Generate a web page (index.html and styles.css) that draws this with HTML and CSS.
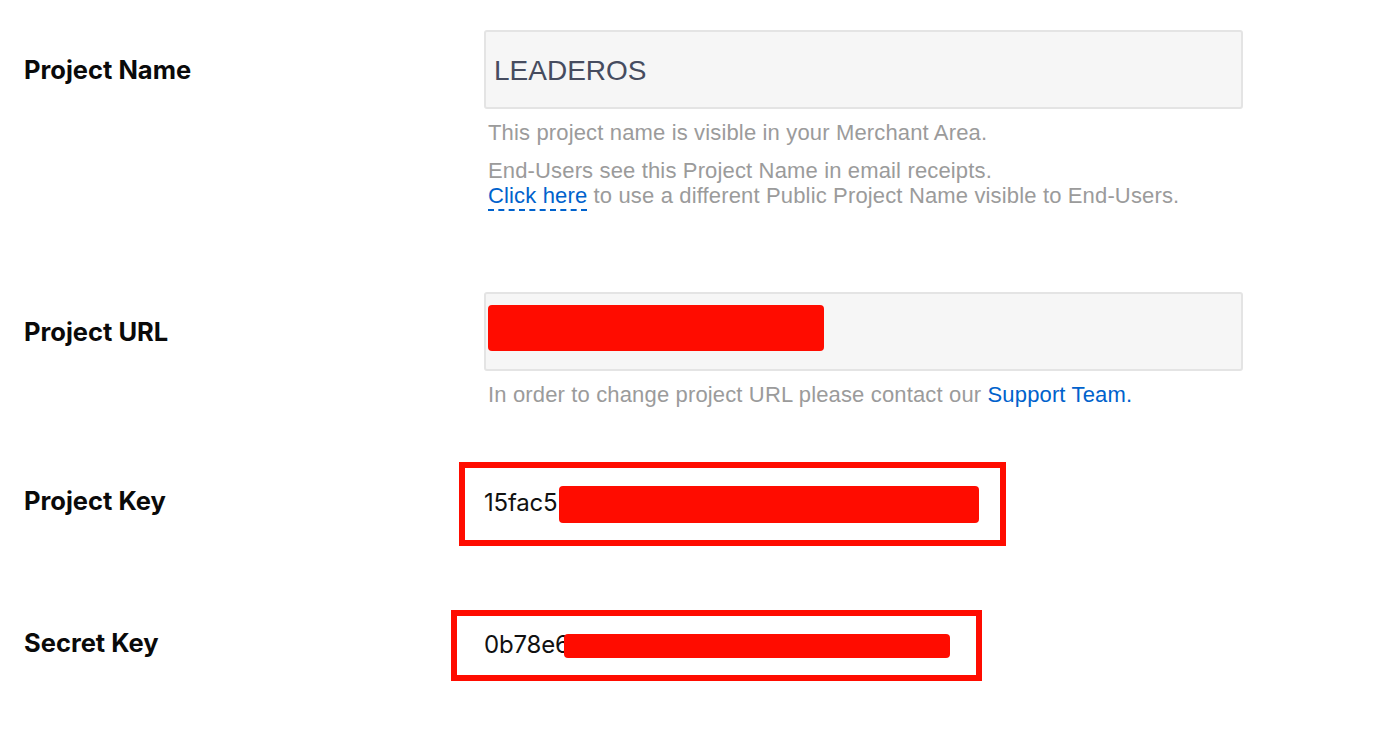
FILE: index.html
```html
<!DOCTYPE html>
<html lang="en">
<head>
<meta charset="utf-8">
<title>Project settings</title>
<link rel="stylesheet" href="styles.css">
</head>
<body>
<main class="settings">
  <section class="row row-name">
    <div class="label">Project Name</div>
    <div class="field">
      <div class="input"><span class="input-text">LEADEROS</span></div>
      <p class="help">This project name is visible in your Merchant Area.</p>
      <p class="help help-gap">End-Users see this Project Name in email receipts.<br><a class="link dashed" href="#">Click here</a> to use a different Public Project Name visible to End-Users.</p>
    </div>
  </section>

  <section class="row row-url">
    <div class="label">Project URL</div>
    <div class="field">
      <div class="input input-url"><span class="redact redact-url"></span></div>
      <p class="help">In order to change project URL please contact our <a class="link" href="#">Support Team.</a></p>
    </div>
  </section>

  <section class="row row-pkey">
    <div class="label label-key">Project Key</div>
    <div class="field">
      <div class="keybox keybox-project">
        <span class="key">15fac5</span><span class="redact redact-pkey"></span>
      </div>
    </div>
  </section>

  <section class="row row-skey">
    <div class="label label-key">Secret Key</div>
    <div class="field">
      <div class="keybox keybox-secret">
        <span class="key">0b78e6</span><span class="redact redact-skey"></span>
      </div>
    </div>
  </section>
</main>
</body>
</html>
```

FILE: styles.css
```css
html, body {
  margin: 0;
  padding: 0;
  background: #ffffff;
}

body {
  font-family: "Liberation Sans", Arial, sans-serif;
  color: #000;
}

.settings {
  padding: 30px 0 0 24px;
}

.row {
  display: grid;
  grid-template-columns: 460px 760px;
  align-items: start;
}

.label {
  height: 79px;
  display: flex;
  align-items: center;
  font-family: "Inter", "Lato", sans-serif;
  font-weight: 700;
  font-size: 25.5px;
  color: #0a0a0a;
}

.input {
  box-sizing: border-box;
  height: 79px;
  width: 759px;
  background: #f6f6f6;
  border: 2px solid #e4e4e4;
  border-radius: 3px;
  display: flex;
  align-items: center;
}

.input-text {
  padding: 2px 0 0 8px;
  font-size: 28px;
  color: #464c5f;
}

.input-url {
  align-items: flex-start;
}

.help {
  margin: 11px 0 0 4px;
  font-size: 22px;
  letter-spacing: 0.15px;
  line-height: 25px;
  color: #9b9b9b;
}

.help-gap {
  margin-top: 13px;
}

.link {
  color: #0062cc;
  text-decoration: none;
}

.link.dashed {
  border-bottom: 2px dashed #0062cc;
  padding-bottom: 1px;
}

.redact {
  display: inline-block;
  background: #ff0c00;
  border-radius: 4px;
}

.redact-url {
  width: 336px;
  height: 46px;
  margin: 11px 0 0 2px;
}

.row-url {
  margin-top: 84px;
}

.row-pkey {
  margin-top: 55px;
}

.row-skey {
  margin-top: 64px;
}

.label-key {
  height: auto;
  align-self: center;
  padding-bottom: 7px;
}

.keybox {
  box-sizing: border-box;
  border: 6px solid #ff0c00;
  display: flex;
  align-items: center;
}

.keybox-project {
  margin-left: -25px;
  width: 547px;
  height: 84px;
  padding-left: 19px;
}

.keybox-secret {
  margin-left: -33px;
  width: 531px;
  height: 71px;
  padding-left: 27px;
}

.key {
  margin-bottom: 3px;
  font-family: "Inter", "Lato", sans-serif;
  font-size: 24px;
  letter-spacing: -0.2px;
  color: #111;
  white-space: nowrap;
}

.redact-pkey {
  width: 420px;
  height: 37px;
  margin-left: 2px;
}

.redact-skey {
  width: 386px;
  height: 24px;
  margin-left: -6px;
}
```
